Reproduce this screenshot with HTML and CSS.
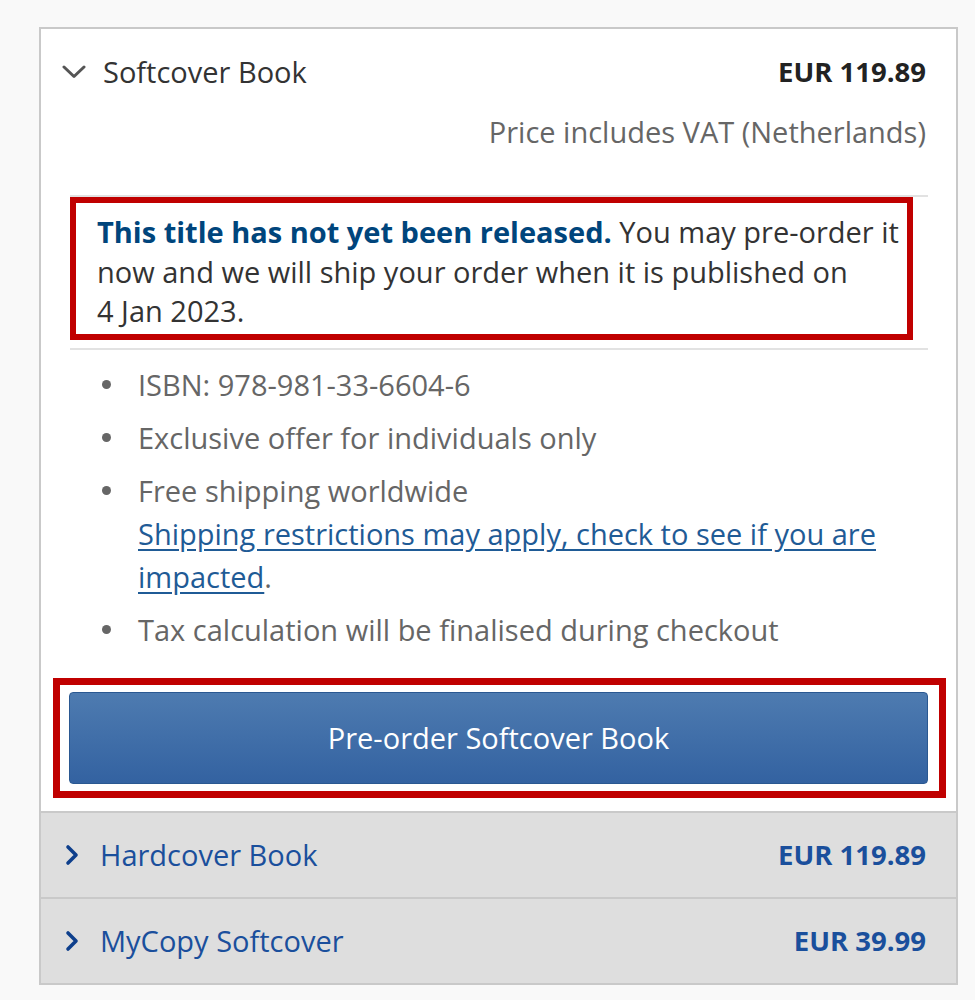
FILE: index.html
```html
<!DOCTYPE html>
<html lang="en">
<head>
<meta charset="utf-8">
<title>Buying options</title>
<link rel="stylesheet" href="styles.css">
</head>
<body>
<div class="panel">
  <section class="option option-open">
    <div class="option-head">
      <svg class="chev-down" width="24" height="14" viewBox="0 0 24 14"><path d="M2 2 L12 11.5 L22 2" fill="none" stroke="#555" stroke-width="3" stroke-linecap="round" stroke-linejoin="round"/></svg>
      <span class="option-title">Softcover Book</span>
      <span class="option-price">EUR 119.89</span>
    </div>
    <div class="vat">Price includes VAT (Netherlands)</div>
    <div class="option-body">
      <div class="notice-wrap">
        <p class="notice"><strong>This title has not yet been released.</strong> You may pre-order it now and we will ship your order when it is published on <span class="date">4 Jan 2023</span>.</p>
      </div>
      <ul class="facts">
        <li>ISBN: 978-981-33-6604-6</li>
        <li>Exclusive offer for individuals only</li>
        <li>Free shipping worldwide<br><a href="#">Shipping restrictions may apply, check to see if you are impacted</a>.</li>
        <li>Tax calculation will be finalised during checkout</li>
      </ul>
      <div class="buy-wrap">
        <button class="buy">Pre-order Softcover Book</button>
      </div>
    </div>
  </section>
  <section class="option option-closed">
    <svg class="chev-right" width="14" height="22" viewBox="0 0 14 22"><path d="M3 3 L11 11 L3 19" fill="none" stroke="#0e3f8c" stroke-width="3.6" stroke-linecap="round" stroke-linejoin="round"/></svg>
    <span class="option-title">Hardcover Book</span>
    <span class="option-price">EUR 119.89</span>
  </section>
  <section class="option option-closed">
    <svg class="chev-right" width="14" height="22" viewBox="0 0 14 22"><path d="M3 3 L11 11 L3 19" fill="none" stroke="#0e3f8c" stroke-width="3.6" stroke-linecap="round" stroke-linejoin="round"/></svg>
    <span class="option-title">MyCopy Softcover</span>
    <span class="option-price">EUR 39.99</span>
  </section>
</div>
</body>
</html>
```
FILE: styles.css
```css
* { box-sizing: border-box; }
html, body { margin: 0; padding: 0; }
body {
  background: #f9f9f9;
  font-family: "Open Sans", "Noto Sans", sans-serif;
  color: #333;
}
.panel {
  margin: 27px 0 0 39px;
  width: 919px;
  border: 2px solid #c9c9c9;
  background: #fff;
}
.option-head {
  display: flex;
  align-items: center;
  padding: 23px 30px 0 21px;
  height: 63px;
}
.chev-down { flex: none; margin-right: 17px; }
.option-title { font-size: 29px; line-height: 40px; }
.option-price {
  margin-left: auto;
  font-size: 27.5px;
  font-weight: 700;
  line-height: 40px;
  color: #222;
}
.vat {
  text-align: right;
  padding: 0 30px 0 0;
  margin-top: 20px;
  font-size: 29px;
  line-height: 40px;
  color: #666;
}
.option-body {
  margin: 43px 28px 0 29px;
  border-top: 2px solid #e2e2e2;
}
.notice-wrap {
  width: 843px;
  border: 6px solid #c00000;
  padding: 9px 4px 3px 21px;
}
.notice {
  margin: 0;
  font-size: 29px;
  line-height: 39.5px;
  color: #333;
}
.notice strong { color: #00457c; font-weight: 700; }
.date { white-space: nowrap; }
.facts {
  list-style: none;
  margin: 8px 0 0;
  padding: 13px 0 0 68px;
  border-top: 2px solid #e2e2e2;
  font-size: 29px;
  line-height: 43px;
  color: #666;
}
.facts li { position: relative; margin-bottom: 10px; }
.facts li::before {
  content: "";
  position: absolute;
  left: -36px;
  top: 17px;
  width: 9px;
  height: 9px;
  border-radius: 50%;
  background: #666;
}
.facts a { color: #1f5b96; text-decoration: underline; text-underline-offset: 4px; }
.buy-wrap {
  margin: 27px -18px 0 -17px;
  border: 7px solid #c00000;
  padding: 7px 11px 7px 9px;
}
.buy {
  display: block;
  width: 100%;
  height: 92px;
  border: 1px solid #2a5891;
  border-radius: 4px;
  background: linear-gradient(#4e7bb0, #3362a1);
  color: #fff;
  font-family: "Open Sans", "Noto Sans", sans-serif;
  font-size: 29px;
  padding: 0;
}
.option-open { padding-bottom: 13px; }
.option-closed {
  display: flex;
  align-items: center;
  height: 86px;
  padding: 0 30px 0 24px;
  background: #dedede;
  border-top: 2px solid #c9c9c9;
  color: #1a4f9c;
}
.chev-right { flex: none; margin-right: 21px; }
.option-closed .option-price { color: #1a4f9c; }
```
